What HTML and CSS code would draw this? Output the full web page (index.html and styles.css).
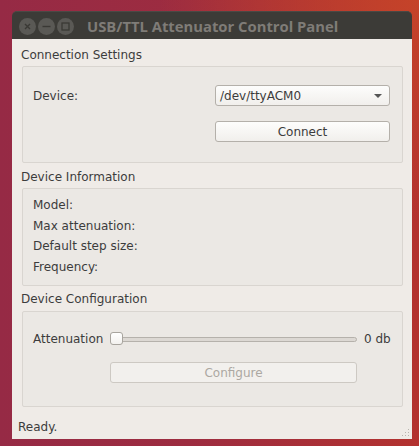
FILE: index.html
```html
<!DOCTYPE html>
<html>
<head>
<meta charset="utf-8">
<link rel="stylesheet" href="styles.css">
</head>
<body>
<div class="window">
  <div class="titlebar">
    <div class="wbtns">
      <span class="wbtn"><svg width="17" height="17" viewBox="0 0 17 17"><path d="M6 6 L11 11 M11 6 L6 11" stroke="#3a3935" stroke-width="1.4" fill="none"/></svg></span>
      <span class="wbtn"><svg width="17" height="17" viewBox="0 0 17 17"><path d="M4.5 8.5 H12.5" stroke="#3a3935" stroke-width="1.4" fill="none"/></svg></span>
      <span class="wbtn"><svg width="17" height="17" viewBox="0 0 17 17"><rect x="5" y="5" width="7" height="7" stroke="#3a3935" stroke-width="1.3" fill="none"/></svg></span>
    </div>
    <div class="title">USB/TTL Attenuator Control Panel</div>
  </div>
  <div class="content">
    <div class="gtitle first">Connection Settings</div>
    <div class="frame f1">
      <div class="conn">
        <span class="lbl">Device:</span>
        <div class="combo"><span>/dev/ttyACM0</span><span class="arrow"></span></div>
        <span></span>
        <div class="btn">Connect</div>
      </div>
    </div>
    <div class="gtitle t2">Device Information</div>
    <div class="frame f2">
      <div class="row">Model:</div>
      <div class="row">Max attenuation:</div>
      <div class="row">Default step size:</div>
      <div class="row">Frequency:</div>
    </div>
    <div class="gtitle t3">Device Configuration</div>
    <div class="frame f3">
      <div class="cfg">
        <span class="lbl">Attenuation</span>
        <div class="slider"><div class="groove"></div><div class="handle"></div></div>
        <span class="val">0 db</span>
        <span></span>
        <div class="btn disabled">Configure</div>
        <span></span>
      </div>
    </div>
    <div class="status">Ready.</div>
    <div class="grip">
      <i style="grid-area:1/3"></i>
      <i style="grid-area:2/2"></i><i style="grid-area:2/3"></i>
      <i style="grid-area:3/1"></i><i style="grid-area:3/2"></i><i style="grid-area:3/3"></i>
    </div>
  </div>
</div>
</body>
</html>
```
FILE: styles.css
```css
html, body {
  margin: 0;
  padding: 0;
}
body {
  width: 419px;
  height: 446px;
  overflow: hidden;
  background:
    radial-gradient(ellipse 260px 220px at 100% 0%, rgba(200, 70, 40, 0.85), rgba(200, 70, 40, 0) 100%),
    linear-gradient(to right, #962a45 0%, #9d2c40 45%, #b3322f 100%);
  font-family: "DejaVu Sans", sans-serif;
  font-size: 12px;
  color: #3c3c3c;
}
.window {
  margin: 11px 0 0 12px;
  width: 400px;
  display: flex;
  flex-direction: column;
}
.titlebar {
  height: 28px;
  background: #3c3b37;
  border-radius: 5px 5px 0 0;
  border-top: 1px solid #4a4945;
  box-sizing: border-box;
  display: flex;
  align-items: center;
}
.wbtns {
  display: flex;
  gap: 2px;
  margin-left: 7px;
  margin-top: 2px;
}
.wbtn {
  width: 17px;
  height: 17px;
  border-radius: 50%;
  background: #5a5955;
  display: flex;
}
.title {
  margin-left: 13px;
  margin-top: 1px;
  font-family: "Open Sans", sans-serif;
  font-weight: 700;
  font-size: 14.8px;
  color: #7f7c77;
  white-space: nowrap;
}
.content {
  height: 400px;
  box-sizing: border-box;
  background: #efebe7;
  padding: 0 9px 0 10px;
  position: relative;
  color: #3c3c3c;
}
.gtitle {
  height: 16px;
  line-height: 16px;
  margin-left: -1px;
  white-space: nowrap;
}
.gtitle.first { padding-top: 8px; margin-bottom: 3px; }
.t2 { margin-top: 6px; margin-bottom: 3px; }
.t3 { margin-top: 5px; margin-bottom: 4px; }
.frame {
  border: 1px solid #d9d5d0;
  border-radius: 2px;
  background: #ebe8e4;
  box-sizing: border-box;
}
.f1 { height: 97px; padding: 18px 12px 0 10px; }
.f2 { height: 98px; padding: 6px 10px 0 10px; }
.f3 { height: 96px; padding: 20px 8px 0 10px; }
.conn {
  display: grid;
  grid-template-columns: 1fr 175px;
  grid-template-rows: 21px 21px;
  row-gap: 15px;
  align-items: center;
}
.lbl { line-height: 16px; white-space: nowrap; }
.combo, .btn {
  height: 21px;
  box-sizing: border-box;
  border: 1px solid #b4b0aa;
  border-radius: 3px;
  background: linear-gradient(#fdfdfc, #f1efec);
  display: flex;
  align-items: center;
}
.combo {
  padding-left: 4px;
  padding-right: 7px;
  justify-content: space-between;
}
.arrow {
  width: 0;
  height: 0;
  border-left: 4px solid transparent;
  border-right: 4px solid transparent;
  border-top: 4px solid #555;
  margin-top: 1px;
}
.btn {
  justify-content: center;
  color: #3c3c3c;
}
.btn.disabled {
  border-color: #cdc9c3;
  background: #f2f0ed;
  color: #aca8a2;
}
.row {
  height: 20.5px;
  line-height: 20.5px;
}
.cfg {
  display: grid;
  grid-template-columns: 70px 247px 1fr;
  column-gap: 7px;
  grid-template-rows: 14px 21px;
  row-gap: 16px;
  align-items: center;
}
.val {
  white-space: nowrap;
  line-height: 16px;
}
.slider {
  position: relative;
  height: 14px;
}
.groove {
  position: absolute;
  left: 4px;
  right: 0;
  top: 5px;
  height: 5px;
  box-sizing: border-box;
  border: 1px solid #b5b1ab;
  border-radius: 3px;
  background: #dcd8d3;
}
.handle {
  position: absolute;
  left: 0;
  top: 0;
  width: 13px;
  height: 13px;
  box-sizing: border-box;
  border: 1px solid #a8a49e;
  border-radius: 3px;
  background: linear-gradient(#ffffff, #f3f1ee);
}
.status {
  margin-top: 12px;
  margin-left: -4px;
  height: 16px;
  line-height: 16px;
}
.grip {
  position: absolute;
  right: 3px;
  bottom: 3px;
  display: grid;
  grid-template-columns: repeat(3, 1px);
  grid-template-rows: repeat(3, 1px);
  gap: 2px;
}
.grip i {
  width: 1px;
  height: 1px;
  background: #b8b4ae;
}
```
